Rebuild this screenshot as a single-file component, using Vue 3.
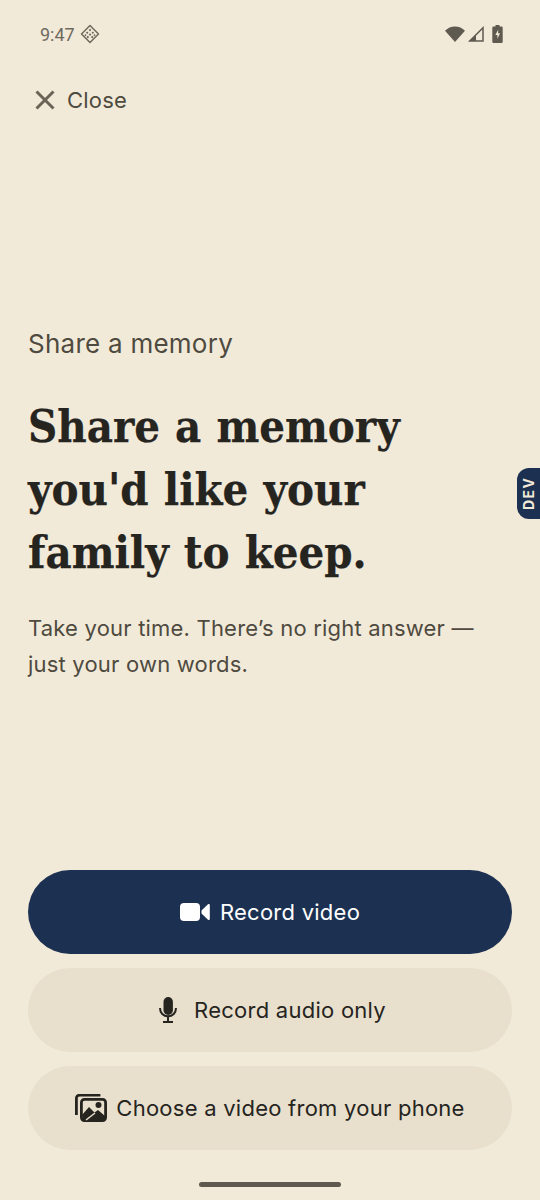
<script setup>
</script>

<template>
  <div class="screen">
    <div class="status">
      <div class="status-left">
        <span class="time">9:47</span>
        <svg class="diamond" width="20" height="20" viewBox="0 0 20 20">
          <path d="M10 1.500 18.500 10 10 18.500 1.500 10Z" fill="none" stroke="#6e695e" stroke-width="1.500" stroke-linejoin="round"/>
          <path d="M10 4.800l1.300 1.300L10 7.400 8.700 6.100ZM7.200 7.400l1.300 1.300-1.300 1.300-1.300-1.300ZM12.800 7.400l1.300 1.300-1.300 1.300-1.300-1.300ZM10 9.300l1.300 1.300L10 11.900l-1.300-1.300ZM5.400 10l1.200 1.200-1.200 1-1-1ZM14.600 10l1 1.200-1 1-1.200-1ZM7.800 11.800l1.300 1.300-1.300 1.300-1.300-1.300ZM12.200 11.800l1.300 1.300-1.300 1.300-1.300-1.300Z" fill="#6e695e"/>
        </svg>
      </div>
      <div class="status-right">
        <svg class="wifi" width="20" height="16" viewBox="0 0 20 16"><path d="M0 4.800C2.700 2 6.200.5 10 .5s7.300 1.500 10 4.300L10 16Z" fill="#5f5a50"/></svg>
        <svg class="signal" width="17" height="16" viewBox="0 0 17 16"><path d="M16 1.800V15H2.800Z" fill="none" stroke="#5f5a50" stroke-width="1.500"/><path d="M9 15V8.800L2 15Z" fill="#5f5a50"/></svg>
        <svg class="battery" width="11" height="18" viewBox="0 0 11 18"><path d="M3.500 0h4v1.500h2a1.200 1.200 0 0 1 1.200 1.200v14a1.200 1.200 0 0 1-1.200 1.200h-8a1.200 1.200 0 0 1-1.200-1.200v-14a1.200 1.200 0 0 1 1.200-1.200h2Z" fill="#5f5a50"/><path d="M6.300 4.500 3.400 10h2v3.800L8 8.300H6Z" fill="#f2ead9"/></svg>
      </div>
    </div>

    <div class="close">
      <svg width="22" height="22" viewBox="0 0 22 22"><path d="M2.500 2.500l17 17M19.500 2.500l-17 17" stroke="#6a6458" stroke-width="3" fill="none"/></svg>
      <span>Close</span>
    </div>

    <main class="intro">
      <p class="eyebrow">Share a memory</p>
      <h1>Share a memory<br>you'd like your<br>family to keep.</h1>
      <p class="lede">Take your time. There’s no right answer —<br>just your own words.</p>
    </main>

    <div class="actions">
      <button class="btn primary">
        <svg width="30" height="18" viewBox="0 0 30 18"><rect x="0" y="0" width="20" height="18" rx="4" fill="#fff"/><path d="M21.500 7.500 28 1.200c.7-.5 1.800-.1 1.800.8v14c0 .9-1.100 1.300-1.800.8l-6.500-6.300Z" fill="#fff"/></svg>
        <span>Record video</span>
      </button>
      <button class="btn audio">
        <svg width="18" height="26" viewBox="0 0 18 26"><rect x="4.500" y="0" width="9.400" height="18" rx="4.700" fill="#26241f"/><path d="M1 11c0 4.800 3.400 8.300 8 8.300s8-3.500 8-8.300M9 19.300v5.200M4 25h10" fill="none" stroke="#26241f" stroke-width="2"/></svg>
        <span>Record audio only</span>
      </button>
      <button class="btn choose">
        <svg width="32" height="28" viewBox="0 0 32 28"><path d="M1.400 21V4.200a3 3 0 0 1 3-3h21" fill="none" stroke="#26241f" stroke-width="2.800"/><rect x="6.400" y="5.400" width="24.200" height="21.200" rx="3" fill="none" stroke="#26241f" stroke-width="2.800"/><path d="M7 21l7-8 5.500 5.500 3.500-2.500 7 6v4H8Z" fill="#26241f"/><circle cx="23.500" cy="11" r="3" fill="#26241f"/><path d="M11 26l9-7" stroke="#e8e0cc" stroke-width="1.500"/></svg>
        <span>Choose a video from your phone</span>
      </button>
    </div>

    <div class="home"></div>
    <div class="dev">DEV</div>
  </div>
</template>

<style scoped>
.screen {
  position: relative;
  width: 540px;
  height: 1200px;
  background: #f2ead9;
  font-family: Inter, "Noto Sans", sans-serif;
  display: flex;
  flex-direction: column;
  overflow: hidden;
  box-sizing: border-box;
}
.status {
  height: 68px;
  padding: 0 37px 0 40px;
  display: flex;
  align-items: center;
  justify-content: space-between;
  flex: none;
}
.status-left { display: flex; align-items: center; gap: 5px; }
.time { font-size: 18px; color: #6e695e; font-family: Roboto, sans-serif; }
.status-right { display: flex; align-items: center; }
.signal { margin-left: 2px; }
.battery { margin-left: 8px; }
.close {
  display: flex;
  align-items: center;
  gap: 11px;
  padding-left: 34px;
  height: 64px;
  font-size: 22px;
  letter-spacing: .2px;
  color: #4f4a40;
  flex: none;
}
.intro {
  padding: 0 28px;
  margin-top: 196px;
  flex: none;
}
.eyebrow {
  margin: 0;
  font-size: 26px;
  letter-spacing: .25px;
  line-height: 32px;
  color: #4f4a40;
}
h1 {
  margin: 35px 0 0;
  font-family: "DejaVu Serif Condensed", "DejaVu Serif", serif;
  font-weight: 700;
  font-size: 45px;
  word-spacing: 1px;
  line-height: 63px;
  color: #26241f;
  -webkit-text-stroke: .25px #26241f;
}
.lede {
  margin: 26px 0 0;
  font-size: 22px;
  letter-spacing: .2px;
  line-height: 36px;
  color: #4f4a40;
}
.actions {
  position: absolute;
  left: 28px;
  right: 28px;
  top: 870px;
  display: flex;
  flex-direction: column;
  gap: 14px;
}
.btn {
  height: 84px;
  border: none;
  border-radius: 42px;
  background: #e8e0cc;
  color: #26241f;
  font: inherit;
  font-size: 22px;
  letter-spacing: .25px;
  display: flex;
  align-items: center;
  justify-content: center;
  gap: 10px;
  padding: 0;
}
.audio { gap: 17px; padding-left: 5px; }
.choose { gap: 9px; }
.primary { background: #1c3151; color: #fff; }
.home {
  position: absolute;
  left: 199px;
  top: 1182px;
  width: 142px;
  height: 5px;
  border-radius: 3px;
  background: #5f5a50;
}
.dev {
  position: absolute;
  right: 0;
  top: 468px;
  width: 23px;
  height: 51px;
  background: #1c3151;
  color: #f2ead9;
  border-radius: 0 12px 12px 0;
  font-size: 14px;
  font-weight: 700;
  letter-spacing: 1.500px;
  writing-mode: vertical-rl;
  transform: rotate(180deg);
  display: flex;
  align-items: center;
  justify-content: center;
}
</style>
